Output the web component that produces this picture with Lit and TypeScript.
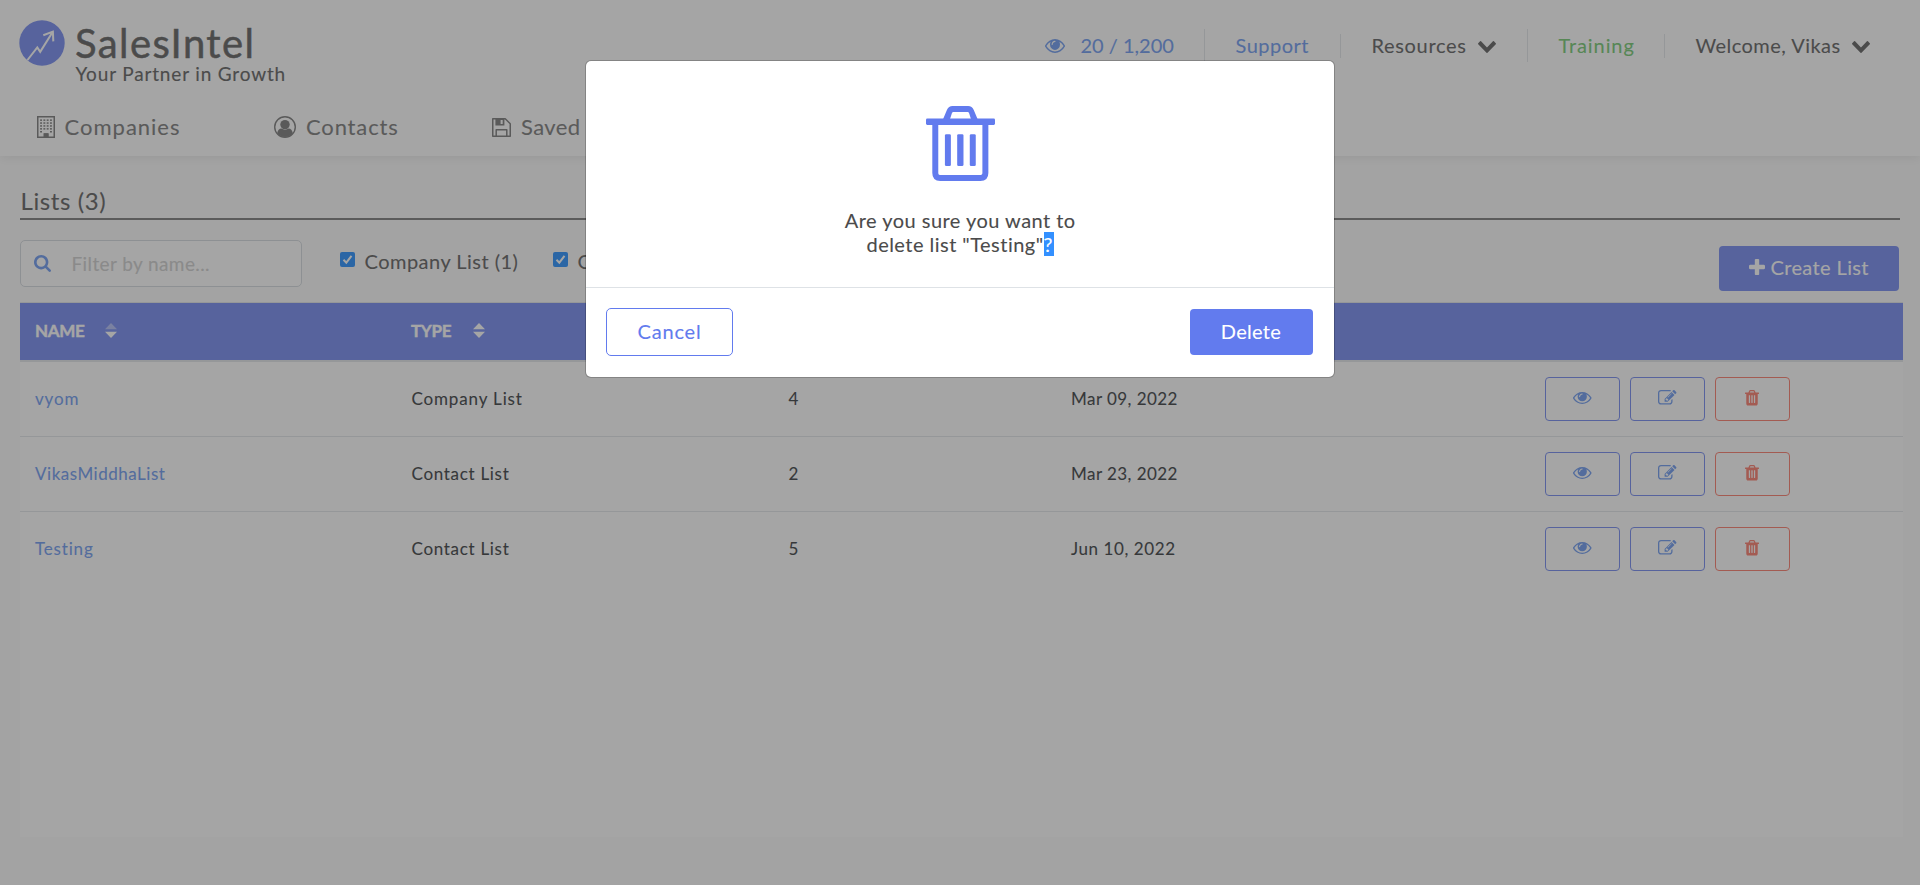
import { LitElement, html, css, svg } from "lit";
import { customElement, property, state } from "lit/decorators.js";

const glyphs: Record<string, { box: string; body: unknown }> = {
  eye: {
    box: "0 384 1792 1152",
    body: svg`<path d="M1664 960q-152-236-381-353 61 104 61 225 0 185-131.5 316.5t-316.5 131.5-316.5-131.5-131.5-316.5q0-121 61-225-229 117-381 353 133 205 333.5 326.5t434.5 121.5 434.5-121.5 333.5-326.5zm-720-384q0-20-14-34t-34-14q-125 0-214.5 89.5t-89.5 214.5q0 20 14 34t34 14 34-14 14-34q0-86 61-147t147-61q20 0 34-14t14-34zm848 384q0 34-20 69-140 230-376.5 368.5t-499.5 138.5-499.5-139-376.5-368q-20-35-20-69t20-69q140-229 376.5-368t499.5-139 499.5 139 376.5 368q20 35 20 69z"/>`,
  },
  edit: {
    box: "0 128 1792 1408",
    body: svg`<path d="M888 1184l116-116-152-152-116 116v56h96v96h56zm440-720q-16-16-33 1l-350 350q-17 17-1 33t33-1l350-350q17-17 1-33zm80 594v190q0 119-84.5 203.5t-203.5 84.5h-832q-119 0-203.5-84.5t-84.5-203.5v-832q0-119 84.5-203.5t203.5-84.5h832q63 0 117 25 15 7 18 23 3 17-9 29l-49 49q-14 14-32 8-23-6-45-6h-832q-66 0-113 47t-47 113v832q0 66 47 113t113 47h832q66 0 113-47t47-113v-126q0-13 9-22l64-64q15-15 35-7t20 29zm-96-738l288 288-672 672h-288v-288zm444 132l-92 92-288-288 92-92q28-28 68-28t68 28l152 152q28 28 28 68t-28 68z"/>`,
  },
  trash: {
    box: "192 128 1408 1536",
    body: svg`<path d="M704 1376v-704q0-14-9-23t-23-9h-64q-14 0-23 9t-9 23v704q0 14 9 23t23 9h64q14 0 23-9t9-23zm256 0v-704q0-14-9-23t-23-9h-64q-14 0-23 9t-9 23v704q0 14 9 23t23 9h64q14 0 23-9t9-23zm256 0v-704q0-14-9-23t-23-9h-64q-14 0-23 9t-9 23v704q0 14 9 23t23 9h64q14 0 23-9t9-23zm-544-992h448l-48-117q-7-9-17-11h-317q-10 2-17 11zm928 32v64q0 14-9 23t-23 9h-96v948q0 83-47 143.5t-113 60.5h-832q-66 0-113-58.5t-47-141.5v-952h-96q-14 0-23-9t-9-23v-64q0-14 9-23t23-9h309l70-167q15-37 54-63t79-26h320q40 0 79 26t54 63l70 167h309q14 0 23 9t9 23z"/>`,
  },
  search: {
    box: "64 128 1664 1664",
    body: svg`<path d="M1216 832q0-185-131.5-316.5t-316.5-131.5-316.5 131.5-131.5 316.5 131.5 316.5 316.5 131.5 316.5-131.5 131.5-316.5zm512 832q0 52-38 90t-90 38q-54 0-90-38l-343-342q-179 124-399 124-143 0-273.5-55.5t-225-150-150-225-55.5-273.5 55.5-273.5 150-225 225-150 273.5-55.5 273.5 55.5 225 150 150 225 55.5 273.5q0 220-124 399l343 343q37 37 37 90z"/>`,
  },
  plus: {
    box: "192 128 1408 1408",
    body: svg`<path d="M1600 736v192q0 40-28 68t-68 28h-416v416q0 40-28 68t-68 28h-192q-40 0-68-28t-28-68v-416h-416q-40 0-68-28t-28-68v-192q0-40 28-68t68-28h416v-416q0-40 28-68t68-28h192q40 0 68 28t28 68v416h416q40 0 68 28t28 68z"/>`,
  },
  chevron: {
    box: "90 533 1612 1035",
    body: svg`<path d="M1683 808l-742 741q-19 19-45 19t-45-19l-742-741q-19-19-19-45.5t19-45.5l166-165q19-19 45-19t45 19l531 531 531-531q19-19 45-19t45 19l166 165q19 19 19 45.5t-19 45.5z"/>`,
  },
  building: {
    box: "0 0 18 22",
    body: svg`<path fill-rule="evenodd" d="M0 0h18v22H0zM1.5 1.5v19H7v-3h4.500v3h5v-19z"/>${[3.4, 6.3, 9.2, 12.1, 15].map((y, r) =>
      [3.1, 6.4, 9.7, 13].map((x, c) => (r === 4 && (c === 1 || c === 2) ? svg`` : svg`<rect x=${x} y=${y} width="1.900" height="1.500"/>`)),
    )}<rect x="6.500" y="17.200" width="5" height="3.800"/>`,
  },
  user: {
    box: "0 0 22 22",
    body: svg`<circle cx="11" cy="11" r="10.300" fill="none" stroke="currentColor" stroke-width="1.400"/><circle cx="11" cy="8.600" r="4.700"/><path d="M3.200 17.300c.5-3 2-4.600 4.200-4.700 2 1.500 5.200 1.500 7.200 0 2.200.1 3.700 1.700 4.200 4.700A10 10 0 0 1 3.200 17.300z"/>`,
  },
  floppy: {
    box: "0 0 19 19",
    body: svg`<path d="M.75.75h12.500l5 5v12.500H.75zM4.200 18V11.700h10.600V18" fill="none" stroke="currentColor" stroke-width="1.500" stroke-linejoin="round"/><path fill-rule="evenodd" d="M3.400.8h9v6.600h-9zM8.600 2v4h2.100V2z"/>`,
  },
  can: {
    box: "78 47 208 226",
    body: svg`<path fill-rule="evenodd" d="M129 88l12-29q5-12 17-12h47q12 0 17 12l12 29h-20l-6-19q-1-4-5-4h-42q-4 0-5 4l-6 19z"/><rect x="78" y="85" width="208" height="19" rx="4"/><path d="M97 100h18v150q0 5 5 5h123q5 0 5-5V100h18v149q0 24-24 24H121q-24 0-24-24z"/><rect x="135" y="132" width="18" height="96" rx="4"/><rect x="172" y="132" width="19" height="96" rx="4"/><rect x="210" y="132" width="18" height="96" rx="4"/>`,
  },
  brand: {
    box: "0 0 46 46",
    body: svg`<circle cx="23" cy="23" r="22.700"/><path d="M8.500 40L18.300 27.500l2.900 4.300L33.500 12.200M24.300 15.200l9.600-3.600.4 9.800" fill="none" stroke="#fff" stroke-width="2"/>`,
  },
  tick: {
    box: "0 0 15 15",
    body: svg`<path d="M3.500 7.800l2.800 2.900L11.500 3.800" fill="none" stroke="#fff" stroke-width="2"/>`,
  },
};

@customElement("si-icon")
class SiIcon extends LitElement {
  @property() name = "eye";
  static styles = css`
    :host { display: inline-block; flex: none; }
    svg { display: block; width: 100%; height: 100%; fill: currentColor; }
  `;
  render() {
    const g = glyphs[this.name];
    return html`<svg viewBox=${g.box} preserveAspectRatio="none">${g.body}</svg>`;
  }
}

interface Row { name: string; type: string; count: number; date: string }

@customElement("app-root")
class AppRoot extends LitElement {
  @state() rows: Row[] = [
    { name: "vyom", type: "Company List", count: 4, date: "Mar 09, 2022" },
    { name: "VikasMiddhaList", type: "Contact List", count: 2, date: "Mar 23, 2022" },
    { name: "Testing", type: "Contact List", count: 5, date: "Jun 10, 2022" },
  ];

  static styles = css`
    :host { display: block; position: relative; width: 1920px; height: 885px; overflow: hidden; background: #fbfbfb;
      color: #4b4b4b; font-family: Lato, "Open Sans", sans-serif; font-size: 20px; line-height: 24px; -webkit-text-stroke: 0.1px; }
    * { box-sizing: border-box; }
    button { font: inherit; cursor: pointer; }
    header { height: 156px; background: #fff; box-shadow: 0 2px 10px rgba(0, 0, 0, 0.09); }
    .top { display: flex; justify-content: space-between; height: 102px; }
    .logo { display: flex; gap: 10px; padding: 20px 0 0 19px; }
    .mark { width: 46px; height: 46px; color: #627bee; }
    .brand { font-size: 40px; line-height: 40px; letter-spacing: 1.4px; margin-top: 3px; -webkit-text-stroke: 0.5px; white-space: nowrap; }
    .tag { font-size: 19px; line-height: 22px; letter-spacing: 0.84px; padding-left: 0.500px; -webkit-text-stroke: 0.15px; white-space: nowrap; }
    .links { display: flex; align-items: center; height: 33px; margin-top: 29px; white-space: nowrap; }
    .link { display: flex; align-items: center; height: 24px; padding: 0 0 1px 30.500px; border-left: 1px solid #dee2e6; }
    .link.tall { height: 33px; }
    .usage { width: 190px; border: 0; color: #5a8dee; }
    .usage si-icon { width: 20px; height: 14px; margin: 1px 15.500px 0 0.500px; }
    .support { width: 136px; color: #5a8dee; letter-spacing: 0.5px; }
    .resources { width: 187px; letter-spacing: 0.66px; }
    .training { width: 137px; color: #62c25e; letter-spacing: 0.9px; }
    .welcome { width: 256px; letter-spacing: 0.46px; }
    .link .chev { width: 18px; height: 12px; margin: 3px 0 0 11px; }
    nav { display: flex; padding: 12px 0 0 37px; color: #696969; font-size: 22px; line-height: 26px; }
    .tab { display: flex; align-items: center; height: 26px; white-space: nowrap; }
    .companies { width: 237px; gap: 9.500px; letter-spacing: 1px; }
    .contacts { width: 218px; gap: 10px; letter-spacing: 0.85px; }
    .saved { gap: 10px; letter-spacing: 0.4px; }
    .building { width: 18px; height: 22px; }
    .user { width: 22px; height: 22px; }
    .floppy { width: 19px; height: 19px; }
    main { padding: 30px 17px 0 20px; }
    h1 { margin: 0 3px 0 0; height: 34px; padding-left: 0.500px; border-bottom: 2px solid #6b6b6b; font-weight: 400; font-size: 24px; line-height: 30px; letter-spacing: 0.6px; }
    .tools { display: flex; height: 82px; padding: 20px 4px 0 0; }
    .filter { display: flex; align-items: center; width: 282px; height: 47px; padding-left: 13px; border: 1px solid #ced4da; border-radius: 5px; background: #fff; color: #c8c8c8; font-size: 19px; letter-spacing: 0.4px; }
    .filter si-icon { width: 17px; height: 17px; margin-right: 20.500px; color: #5a8dee; }
    .check { display: flex; width: 213px; height: 24px; margin-top: 9px; letter-spacing: 0.48px; white-space: nowrap; }
    .check:first-of-type { margin-left: 38px; }
    .box { width: 15px; height: 15px; margin: 3px 9.500px 0 0; border-radius: 2px; background: #0a80ff; }
    .create { display: flex; align-items: center; width: 180px; height: 45px; margin: 6px 0 0 auto; padding: 0 0 3px 30px; border: 0; border-radius: 4px; background: #627bee; color: #fff; letter-spacing: 0.38px; white-space: nowrap; }
    .create si-icon { width: 16px; height: 16px; margin: -1px 5.500px 0 0; }
    .table { height: 535px; border-top: 1px solid #dee2e6; background: #fff; color: #212529; font-size: 17px; line-height: 22px; }
    .row { display: grid; grid-template-columns: 376px 377px 283px 474px 1fr; align-items: center; height: 75px; padding-left: 15px; border-top: 1px solid #dee2e6; }
    .row.head { height: 57px; border: 0; background: #627bee; color: #fff; font-weight: 700; }
    .row.head + .row { border-top-width: 2px; height: 76px; }
    .th { display: flex; align-items: center; letter-spacing: -0.35px; -webkit-text-stroke: 0.4px; }
    .th span { margin-bottom: 1px; }
    .th.name { gap: 21px; }
    .th.type { gap: 22px; }
    .sort { width: 12px; height: 15px; fill: #fff; stroke: none; margin-top: -2px; }
    .dim { opacity: 0.45; }
    .who { color: #5a8dee; letter-spacing: 0.52px; }
    .row:nth-child(2) .who, .row:nth-child(4) .who { letter-spacing: 0.82px; }
    .kind { padding-left: 0.500px; letter-spacing: 0.7px; }
    .row:nth-child(2) .kind { letter-spacing: 0.85px; }
    .count { padding-left: 0.500px; }
    .date { letter-spacing: 0.45px; }
    .row:nth-child(4) .date { letter-spacing: 0.58px; }
    .acts { display: flex; gap: 10px; }
    .act { display: flex; align-items: flex-start; justify-content: center; width: 75px; height: 44px; padding: 12px 0 0; border: 1px solid #627bee; border-radius: 4px; background: transparent; color: #5a8dee; }
    .act.del { border-color: #fb6a58; color: #fb6a58; }
    .i-eye { width: 18.500px; height: 12px; margin-top: 2px; }
    .i-edit { width: 18.500px; height: 14.500px; }
    .i-trash { width: 14px; height: 15.500px; margin-right: 0.500px; }
    .shade { position: absolute; inset: 0; background: rgba(75, 75, 75, 0.5); }
    .modal { position: absolute; left: 585px; top: 60px; width: 750px; height: 318px; border: 1px solid rgba(0, 0, 0, 0.2); border-radius: 6px; background: #fff; background-clip: padding-box; }
    .ask { display: flex; flex-direction: column; align-items: center; height: 227px; padding-top: 45px; border-bottom: 1px solid #dee2e6; }
    .can { width: 69px; height: 75px; color: #627bee; }
    .msg { margin-top: 26.500px; padding-left: 0.500px; text-align: center; white-space: nowrap; letter-spacing: 0.47px; height: 48px; line-height: 24px; }
    .mark-sel { display: inline-block; background: #3390ff; color: #fff; height: 24px; letter-spacing: 1.5px; }
    .foot { display: flex; justify-content: space-between; align-items: center; height: 87px; padding: 0 21.500px 0 19.500px; }
    .cancel { width: 127px; height: 48px; padding: 0 0 1px 1px; border: 1px solid #627bee; border-radius: 5px; background: #fff; color: #627bee; letter-spacing: 0.8px; }
    .delete { width: 123px; height: 46px; padding: 0 0 1px; border: 0; border-radius: 4px; background: #627bee; color: #fff; letter-spacing: 0.3px; }
  `;

  sorter(dimUp: boolean) {
    return html`<svg class="sort" viewBox="0 0 12 15"><path class=${dimUp ? "dim" : ""} d="M6 0l6 6.200H0z" /><path d="M6 15l6-6.200H0z" /></svg>`;
  }

  render() {
    return html`
      <header>
        <div class="top">
          <div class="logo">
            <si-icon class="mark" name="brand"></si-icon>
            <div>
              <div class="brand">SalesIntel</div>
              <div class="tag">Your Partner in Growth</div>
            </div>
          </div>
          <div class="links">
            <div class="link usage"><si-icon name="eye"></si-icon>20 / 1,200</div>
            <div class="link tall support">Support</div>
            <div class="link resources">Resources<si-icon class="chev" name="chevron"></si-icon></div>
            <div class="link tall training">Training</div>
            <div class="link welcome">Welcome, Vikas<si-icon class="chev" name="chevron"></si-icon></div>
          </div>
        </div>
        <nav>
          <div class="tab companies"><si-icon class="building" name="building"></si-icon>Companies</div>
          <div class="tab contacts"><si-icon class="user" name="user"></si-icon>Contacts</div>
          <div class="tab saved"><si-icon class="floppy" name="floppy"></si-icon>Saved</div>
        </nav>
      </header>
      <main>
        <h1>Lists (${this.rows.length})</h1>
        <div class="tools">
          <div class="filter"><si-icon name="search"></si-icon>Filter by name...</div>
          <label class="check"><si-icon class="box" name="tick"></si-icon>Company List (1)</label>
          <label class="check"><si-icon class="box" name="tick"></si-icon>C</label>
          <button class="create"><si-icon name="plus"></si-icon>Create List</button>
        </div>
        <div class="table">
          <div class="row head">
            <div class="th name"><span>NAME</span>${this.sorter(true)}</div>
            <div class="th type"><span>TYPE</span>${this.sorter(false)}</div>
          </div>
          ${this.rows.map(
            (r) => html`<div class="row">
              <div class="who">${r.name}</div>
              <div class="kind">${r.type}</div>
              <div class="count">${r.count}</div>
              <div class="date">${r.date}</div>
              <div class="acts">
                <button class="act"><si-icon class="i-eye" name="eye"></si-icon></button>
                <button class="act"><si-icon class="i-edit" name="edit"></si-icon></button>
                <button class="act del"><si-icon class="i-trash" name="trash"></si-icon></button>
              </div>
            </div>`,
          )}
        </div>
      </main>
      <div class="shade"></div>
      <div class="modal">
        <div class="ask">
          <si-icon class="can" name="can"></si-icon>
          <div class="msg">Are you sure you want to<br />delete list "Testing"<span class="mark-sel">?</span></div>
        </div>
        <div class="foot">
          <button class="cancel">Cancel</button>
          <button class="delete">Delete</button>
        </div>
      </div>
    `;
  }
}
